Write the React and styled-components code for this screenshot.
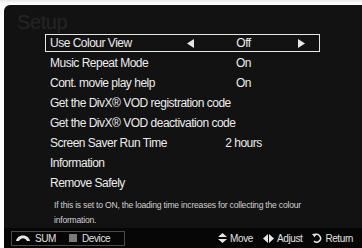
import React from 'react';
import styled, { createGlobalStyle } from 'styled-components';

const GlobalStyle = createGlobalStyle`
  html, body {
    margin: 0;
    padding: 0;
    background: #ffffff;
  }
  body {
    font-family: 'Liberation Sans', Arial, sans-serif;
  }
`;

const Screen = styled.div`
  width: 362px;
  height: 248px;
  overflow: hidden;
  padding: 5px 0 0 4px;
  box-sizing: border-box;
  background: linear-gradient(#e9e9e9 0, #ffffff 4px);
`;

const Panel = styled.div`
  height: 243px;
  background: #121212;
  border-radius: 6px 0 0 0;
  display: flex;
  flex-direction: column;
`;

const Title = styled.div`
  height: 29px;
  padding: 7px 0 0 13px;
  box-sizing: border-box;
  font-size: 20px;
  line-height: 20px;
  letter-spacing: -0.4px;
  color: #252525;
`;

const Menu = styled.div`
  margin-left: 41px;
  width: 275px;
  display: grid;
  grid-auto-rows: 18px;
  row-gap: 2px;
`;

const Row = styled.div`
  display: grid;
  grid-template-columns: 137px 123px;
  align-items: center;
  border: 1px solid ${(p) => (p.$selected ? '#e6e6e6' : 'transparent')};
  box-sizing: border-box;
  padding-left: 4px;
  color: #ececec;
  font-size: 12px;
  letter-spacing: -0.5px;
  white-space: nowrap;
`;

const Label = styled.span``;

const Value = styled.div`
  display: flex;
  align-items: center;
  padding-right: 5px;
`;

const ValueText = styled.span`
  flex: 1;
  text-align: center;
  padding-right: 5px;
`;

const Arrow = styled.svg`
  width: 7px;
  height: 9px;
  fill: #e6e6e6;
`;

const Help = styled.p`
  margin: 6px 0 0 50px;
  width: 275px;
  font-size: 8.6px;
  line-height: 15px;
  letter-spacing: -0.22px;
  color: #d0d0d0;
`;

const BottomBar = styled.div`
  margin-top: auto;
  height: 20px;
  background: #060606;
  display: flex;
  align-items: center;
  padding: 0 9px 0 7px;
  color: #e0e0e0;
  font-size: 10px;
  letter-spacing: -0.4px;
`;

const ToolBox = styled.div`
  width: 114px;
  height: 15px;
  box-sizing: border-box;
  border: 1px solid #4a4a4a;
  display: flex;
  align-items: center;
  padding-left: 4px;
  gap: 5px;
`;

const ToolItem = styled.span`
  display: flex;
  align-items: center;
  gap: 5px;
  margin-right: ${(p) => p.$space || 0}px;
`;

const GraySquare = styled.span`
  width: 8px;
  height: 8px;
  background: #7a7a7a;
`;

const Hints = styled.div`
  margin-left: auto;
  display: flex;
  align-items: center;
  gap: 10px;
`;

const Hint = styled.span`
  display: flex;
  align-items: center;
  gap: 3px;
`;

const Icon = styled.svg`
  fill: #e6e6e6;
`;

const rows = [
  { label: 'Use Colour View', value: 'Off', selected: true },
  { label: 'Music Repeat Mode', value: 'On' },
  { label: 'Cont. movie play help', value: 'On' },
  { label: 'Get the DivX® VOD registration code' },
  { label: 'Get the DivX® VOD deactivation code' },
  { label: 'Screen Saver Run Time', value: '2 hours' },
  { label: 'Information' },
  { label: 'Remove Safely' },
];

export default function App() {
  return (
    <Screen>
      <GlobalStyle />
      <Panel>
        <Title>Setup</Title>
        <Menu>
          {rows.map((r) => (
            <Row key={r.label} $selected={r.selected}>
              <Label>{r.label}</Label>
              {r.value && (
                <Value>
                  {r.selected && (
                    <Arrow viewBox="0 0 7 9"><path d="M0 4.5 7 0v9z" /></Arrow>
                  )}
                  <ValueText>{r.value}</ValueText>
                  {r.selected && (
                    <Arrow viewBox="0 0 7 9"><path d="M7 4.5 0 0v9z" /></Arrow>
                  )}
                </Value>
              )}
            </Row>
          ))}
        </Menu>
        <Help>
          If this is set to ON, the loading time increases for collecting the colour information.
        </Help>
        <BottomBar>
          <ToolBox>
            <ToolItem $space={8}>
              <Icon width="14" height="6" viewBox="0 0 14 6">
                <path d="M0 6C1 2 4 0.5 7 0.5S13 2 14 6H11C10 4 8.5 3.2 7 3.2S4 4 3 6Z" />
              </Icon>
              SUM
            </ToolItem>
            <ToolItem>
              <GraySquare />
              Device
            </ToolItem>
          </ToolBox>
          <Hints>
            <Hint>
              <Icon width="9" height="10" viewBox="0 0 9 10">
                <path d="M4.5 0 9 4H0ZM0 6h9L4.5 10Z" />
              </Icon>
              Move
            </Hint>
            <Hint>
              <Icon width="11" height="9" viewBox="0 0 11 9">
                <path d="M0 4.5 5 0v9ZM11 4.5 6 0v9Z" />
              </Icon>
              Adjust
            </Hint>
            <Hint>
              <Icon width="10" height="10" viewBox="0 0 10 10" style={{ fill: 'none' }}>
                <path d="M2.5 2.2A3.8 3.8 0 1 1 2 8" stroke="#e6e6e6" strokeWidth="1.5" />
                <path d="M0 1 4.5 0.6 2.6 4.2Z" fill="#e6e6e6" />
              </Icon>
              Return
            </Hint>
          </Hints>
        </BottomBar>
      </Panel>
    </Screen>
  );
}
